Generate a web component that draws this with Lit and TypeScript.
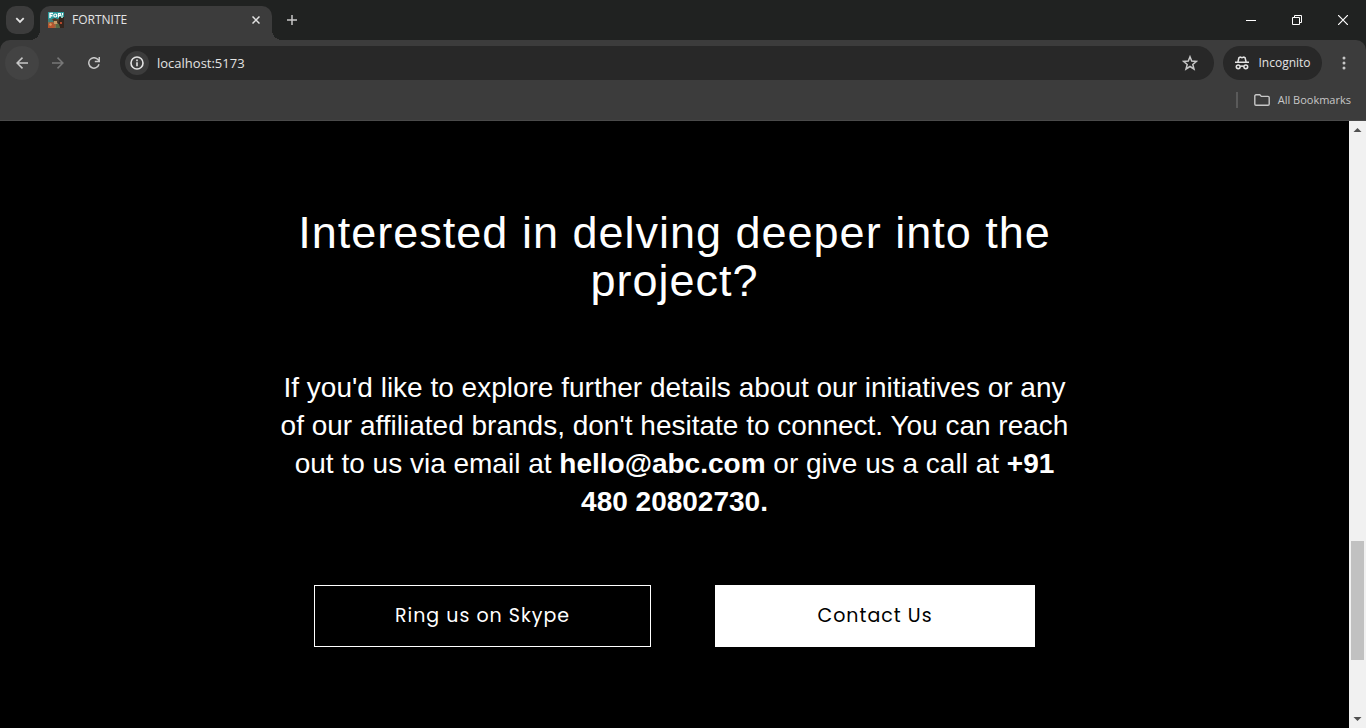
import { LitElement, html, css, svg } from "lit";
import { customElement, state } from "lit/decorators.js";

const favicon = svg`
  <rect width="16" height="16" fill="#8d6a48"/>
  <rect width="16" height="7" fill="#2b9a9c"/>
  <path d="M0 7h4l2 3H0z" fill="#3f7f78"/>
  <path d="M11 5h5v11h-4l-2-5z" fill="#33251d"/>
  <path d="M4 7l3-1 4 2-1 3-4-1z" fill="#4d3b2a"/>
  <path d="M6 9h3v3H6z" fill="#c79a63"/>
  <path d="M0 12l4-2 3 3-1 3H0z" fill="#b4552f"/>
  <path d="M2 11l2 1-1 2-2-1z" fill="#d89a5c"/>
  <path d="M8 12h3l1 4H8z" fill="#566a45"/>
  <path d="M13 3h2v3h-2z" fill="#8fc7bd"/>
  <path d="M12 10h2v2h-2z" fill="#b5482c"/>
  <path d="M2 6V1.500H5M2 3.700H4.500" fill="none" stroke="#fff" stroke-width="1.400"/>
  <circle cx="7.300" cy="3.500" r="1.500" fill="none" stroke="#fff" stroke-width="1.200"/>
  <path d="M10.500 5.500v-4h1.800v2h-1.800M14.500 1v2" fill="none" stroke="#fff" stroke-width="1.200"/>`;

@customElement("browser-toolbar")
class BrowserToolbar extends LitElement {
  @state() private address = "localhost:5173";

  static styles = css`
    :host {
      display: block;
      flex: none;
      font: 12px/16px "Segoe UI", "Open Sans", "Noto Sans", sans-serif;
      color: #e3e3e3;
      background: #202221;
    }
    * { box-sizing: border-box; }
    button {
      display: grid;
      place-items: center;
      flex: none;
      margin: 0;
      padding: 0;
      border: 0;
      color: inherit;
      font: inherit;
      background: none;
    }
    svg { display: block; flex: none; fill: none; stroke: currentColor; }
    svg.solid { fill: currentColor; stroke: none; }
    .strip {
      display: flex;
      height: 40px;
      padding-left: 6px;
    }
    .search {
      width: 28px;
      height: 28px;
      margin: 6px 6px 0 0;
      border-radius: 10px;
      background: #3c3c3c;
    }
    .tab {
      position: relative;
      display: flex;
      align-items: center;
      flex: 0 1 232px;
      min-width: 0;
      height: 34px;
      margin-top: 6px;
      padding: 0 8px 6px;
      border-radius: 10px 10px 0 0;
      background: #3c3c3c;
    }
    .tab::before,
    .tab::after {
      content: "";
      position: absolute;
      bottom: 0;
      width: 10px;
      height: 10px;
    }
    .tab::before {
      right: 100%;
      background: radial-gradient(circle at 0 0, transparent 10px, #3c3c3c 10px);
    }
    .tab::after {
      left: 100%;
      background: radial-gradient(circle at 100% 0, transparent 10px, #3c3c3c 10px);
    }
    .title { flex: 1; margin-left: 8px; }
    .close { width: 16px; height: 16px; }
    .new { width: 28px; height: 28px; margin: 6px 0 0 6px; color: #c7c7c7; }
    .window { display: flex; margin-left: auto; color: #fff; }
    .window button { width: 46px; height: 40px; }
    .bars {
      border-bottom: 1px solid #4a4a4a;
      border-radius: 10px 10px 0 0;
      background: #3c3c3c;
    }
    .nav {
      display: flex;
      align-items: center;
      height: 46px;
      padding: 0 5px;
      gap: 2px;
    }
    .round { width: 34px; height: 34px; border-radius: 50%; color: #c7c7c7; }
    .back { background: #434343; }
    .forward { color: #777; }
    .omnibox {
      display: flex;
      align-items: center;
      flex: 1;
      min-width: 0;
      height: 34px;
      margin: 0 7px;
      padding: 0 7px 0 5px;
      border-radius: 17px;
      background: #282828;
    }
    .info { width: 24px; height: 24px; border-radius: 50%; background: #3c3c3c; }
    .address {
      flex: 1;
      min-width: 0;
      height: 24px;
      margin: 0 8px;
      padding: 0;
      border: 0;
      outline: 0;
      color: #e3e3e3;
      font: 13px/20px "Segoe UI", "Open Sans", "Noto Sans", sans-serif;
      background: none;
    }
    .star { width: 34px; height: 34px; color: #c7c7c7; }
    .incognito {
      display: flex;
      align-items: center;
      justify-content: center;
      gap: 8px;
      width: 99px;
      height: 34px;
      border-radius: 17px;
      background: #282828;
    }
    .menu { width: 34px; height: 34px; margin-left: 3px; color: #c7c7c7; }
    .bookmarks {
      display: flex;
      align-items: center;
      justify-content: flex-end;
      height: 34px;
      padding: 0 15px 6px 0;
      gap: 16px;
      color: #c7c7c7;
      font-size: 11px;
    }
    .divider { width: 2px; height: 16px; background: #5a5a5a; }
    .folder { display: flex; align-items: center; gap: 8px; }
  `;

  render() {
    return html`
      <div class="strip">
        <button class="search" aria-label="Search tabs">
          <svg width="10" height="10" viewBox="0 0 10 10" stroke-width="1.800"><path d="M1.300 3.200 5 6.900 8.700 3.200"/></svg>
        </button>
        <div class="tab">
          <svg class="solid" width="16" height="16" viewBox="0 0 16 16">${favicon}</svg>
          <span class="title">FORTNITE</span>
          <button class="close" aria-label="Close tab">
            <svg width="8" height="8" viewBox="0 0 8 8" stroke-width="1.500"><path d="M.5.5l7 7M7.500.5l-7 7"/></svg>
          </button>
        </div>
        <button class="new" aria-label="New tab">
          <svg width="10" height="10" viewBox="0 0 10 10" stroke-width="1.500"><path d="M5 0v10M0 5h10"/></svg>
        </button>
        <div class="window">
          <button aria-label="Minimize"><svg width="10" height="10" viewBox="0 0 10 10"><path d="M0 5.500h10"/></svg></button>
          <button aria-label="Restore">
            <svg width="10" height="10" viewBox="0 0 10 10"><path d="M.5 2.500h7v7h-7zM2.500 2.500v-2h7v7h-2"/></svg>
          </button>
          <button aria-label="Close"><svg width="10" height="10" viewBox="0 0 10 10" stroke-width="1.200"><path d="M0 0l10 10M10 0L0 10"/></svg></button>
        </div>
      </div>
      <div class="bars">
        <div class="nav">
          <button class="round back" aria-label="Back">
            <svg width="12" height="12" viewBox="0 0 12 12" stroke-width="1.500"><path d="M12 6H1.200M6.500.6 1.100 6l5.400 5.400"/></svg>
          </button>
          <button class="round forward" aria-label="Forward">
            <svg width="12" height="12" viewBox="0 0 12 12" stroke-width="1.500"><path d="M0 6h10.800M5.500.6 10.900 6l-5.400 5.400"/></svg>
          </button>
          <button class="round" aria-label="Reload">
            <svg width="12" height="12" viewBox="0 0 12 12" stroke-width="1.500"><path d="M11 7.300A5.200 5.200 0 1 1 10 2.600L11.200 4M11.300 0v4.600H6.800"/></svg>
          </button>
          <div class="omnibox">
            <button class="info" aria-label="View site information">
              <svg width="14" height="14" viewBox="0 0 14 14" stroke-width="1.600"><circle cx="7" cy="7" r="6"/><path d="M7 6.200v4M7 3.600v1.600"/></svg>
            </button>
            <input class="address" aria-label="Address" .value=${this.address}
              @input=${(e: Event) => (this.address = (e.target as HTMLInputElement).value)}>
            <button class="star" aria-label="Bookmark this tab">
              <svg width="16" height="16" viewBox="0 0 16 16" stroke-width="1.500"><path d="M8 1.800l1.700 4.300 4.700.3-3.600 3 1.200 4.600L8 11.500 4 14l1.200-4.600-3.600-3 4.700-.3z"/></svg>
            </button>
          </div>
          <button class="incognito">
            <svg width="16" height="16" viewBox="0 0 16 16" stroke-width="1.500">
              <path d="M1 7.300h14M3.900 7l1-4.200 1.300-.8 1.800.6 1.800-.6 1.300.8 1 4.200"/>
              <circle cx="4.200" cy="11.800" r="1.900"/><circle cx="11.800" cy="11.800" r="1.900"/><path d="M6.100 11.500q1.900-.8 3.800 0"/>
            </svg>
            <span>Incognito</span>
          </button>
          <button class="menu" aria-label="Menu">
            <svg class="solid" width="4" height="14" viewBox="0 0 4 14"><circle cx="2" cy="2" r="1.500"/><circle cx="2" cy="7" r="1.500"/><circle cx="2" cy="12" r="1.500"/></svg>
          </button>
        </div>
        <div class="bookmarks">
          <span class="divider"></span>
          <button class="folder">
            <svg width="16" height="12" viewBox="0 0 16 12" stroke-width="1.400"><path d="M.8 2A1.200 1.200 0 0 1 2 .8h3.800L7.300 2.400H14A1.200 1.200 0 0 1 15.200 3.600V10A1.200 1.200 0 0 1 14 11.200H2A1.200 1.200 0 0 1 .8 10z"/></svg>
            <span>All Bookmarks</span>
          </button>
        </div>
      </div>
    `;
  }
}

@customElement("page-scrollbar")
class PageScrollbar extends LitElement {
  static styles = css`
    :host {
      display: flex;
      flex-direction: column;
      flex: none;
      width: 17px;
      background: #f1f1f1;
    }
    svg { display: block; flex: none; fill: #505050; }
    .track { display: flex; flex-direction: column; flex: 1; padding: 0 2px; }
    .before { flex: 403; }
    .thumb { flex: 119; background: #c1c1c1; }
    .after { flex: 51; }
  `;

  render() {
    return html`
      <svg width="17" height="17" viewBox="0 0 17 17"><path d="M4.500 11h8l-4-4z"/></svg>
      <div class="track"><div class="before"></div><div class="thumb"></div><div class="after"></div></div>
      <svg width="17" height="17" viewBox="0 0 17 17"><path d="M4.500 6h8l-4 4z"/></svg>
    `;
  }
}

@customElement("contact-section")
class ContactSection extends LitElement {
  static styles = css`
    :host {
      display: block;
      flex: 1;
      min-width: 0;
      overflow: hidden;
      color: #fff;
      background: #000;
    }
    * { box-sizing: border-box; }
    .content {
      display: flex;
      flex-direction: column;
      align-items: center;
      gap: 64px;
      max-width: 800px;
      margin: 0 auto;
      padding: 88px 0;
      font-family: Arial, "Liberation Sans", sans-serif;
      text-align: center;
    }
    h2 {
      margin: 0;
      font-size: 45px;
      font-weight: 400;
      line-height: 48px;
      letter-spacing: 1px;
    }
    p { margin: 0; font-size: 28px; line-height: 38px; }
    .actions { display: flex; flex-wrap: wrap; justify-content: center; gap: 64px; }
    .action {
      min-width: 320px;
      height: 62px;
      padding: 0 80px;
      border: 1px solid #fff;
      border-radius: 0;
      color: #000;
      font: 400 19px/30px Poppins, Inter, sans-serif;
      letter-spacing: 1px;
      background: #fff;
    }
    .outline { min-width: 337px; color: #fff; background: #000; }
  `;

  render() {
    return html`
      <section class="content">
        <h2>Interested in delving deeper into the project?</h2>
        <p>
          If you'd like to explore further details about our initiatives or any of our
          affiliated brands, don't hesitate to connect. You can reach out to us via email at
          <b>hello@abc.com</b> or give us a call at <b>+91 480 20802730.</b>
        </p>
        <div class="actions">
          <button class="action outline">Ring us on Skype</button>
          <button class="action">Contact Us</button>
        </div>
      </section>
    `;
  }
}

@customElement("app-root")
class AppRoot extends LitElement {
  static styles = css`
    :host {
      display: flex;
      flex-direction: column;
      height: 100vh;
      background: #000;
    }
    .viewport { display: flex; flex: 1; min-height: 0; }
  `;

  render() {
    return html`
      <browser-toolbar></browser-toolbar>
      <main class="viewport">
        <contact-section></contact-section>
        <page-scrollbar></page-scrollbar>
      </main>
    `;
  }
}
